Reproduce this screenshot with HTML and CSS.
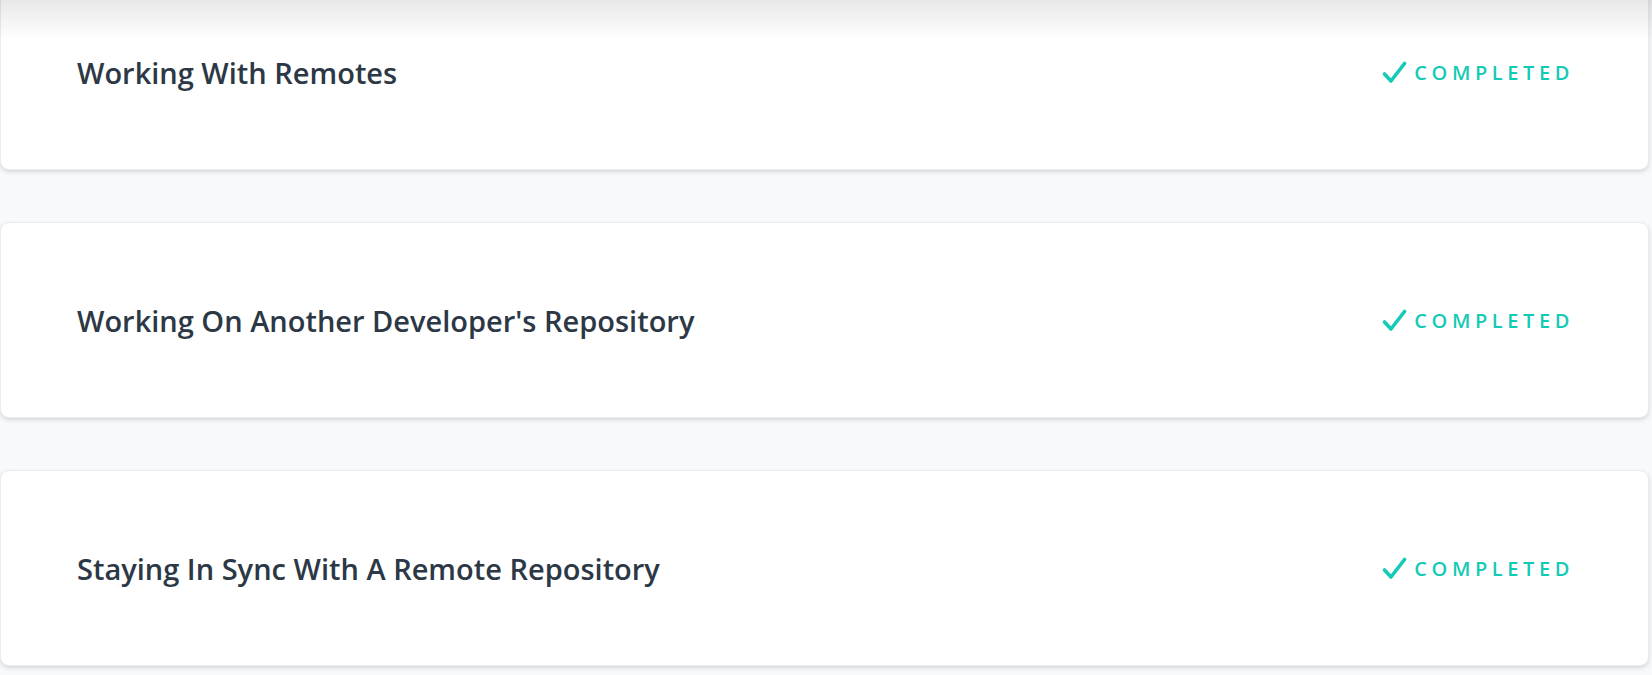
FILE: index.html
```html
<!DOCTYPE html>
<html lang="en">
<head>
<meta charset="utf-8">
<title>Lessons</title>
<link rel="stylesheet" href="styles.css">
</head>
<body>
<div class="top-shade"></div>
<main class="list">
  <section class="card">
    <h2 class="title">Working With Remotes</h2>
    <div class="status">
      <svg class="check" viewBox="0 0 25 23" width="25" height="23"><path d="M2.5 13 L9 20 L22.5 2.5" fill="none" stroke="currentColor" stroke-width="3.6" stroke-linecap="round" stroke-linejoin="round"/></svg>
      <span>COMPLETED</span>
    </div>
  </section>
  <section class="card">
    <h2 class="title">Working On Another Developer's Repository</h2>
    <div class="status">
      <svg class="check" viewBox="0 0 25 23" width="25" height="23"><path d="M2.5 13 L9 20 L22.5 2.5" fill="none" stroke="currentColor" stroke-width="3.6" stroke-linecap="round" stroke-linejoin="round"/></svg>
      <span>COMPLETED</span>
    </div>
  </section>
  <section class="card">
    <h2 class="title">Staying In Sync With A Remote Repository</h2>
    <div class="status">
      <svg class="check" viewBox="0 0 25 23" width="25" height="23"><path d="M2.5 13 L9 20 L22.5 2.5" fill="none" stroke="currentColor" stroke-width="3.6" stroke-linecap="round" stroke-linejoin="round"/></svg>
      <span>COMPLETED</span>
    </div>
  </section>
</main>
</body>
</html>
```
FILE: styles.css
```css
html, body {
  margin: 0;
  padding: 0;
}
body {
  background: #f8f9fb;
  font-family: "Open Sans", "Noto Sans", sans-serif;
  overflow: hidden;
  height: 675px;
}
.top-shade {
  position: fixed;
  top: 0;
  left: 0;
  right: 0;
  height: 40px;
  background: linear-gradient(to bottom, rgba(0,0,0,0.09), rgba(0,0,0,0));
  z-index: 2;
  pointer-events: none;
}
.list {
  display: flex;
  flex-direction: column;
  gap: 52px;
  margin-top: -26px;
  width: 1649px;
}
.card {
  height: 196px;
  box-sizing: border-box;
  background: #fff;
  border-radius: 9px;
  border: 1px solid #ececef;
  box-shadow: 0 2px 4px rgba(0,0,0,0.14);
  display: flex;
  align-items: center;
  justify-content: space-between;
  padding: 0 74px 0 76px;
}
.title {
  margin: 0;
  font-size: 29px;
  font-weight: 600;
  color: #2c3845;
  letter-spacing: 0;
}
.status {
  display: flex;
  align-items: center;
  gap: 7px;
  color: #14cab6;
  font-size: 20px;
  font-weight: 600;
  letter-spacing: 4.6px;
}
.check {
  display: block;
}
```
